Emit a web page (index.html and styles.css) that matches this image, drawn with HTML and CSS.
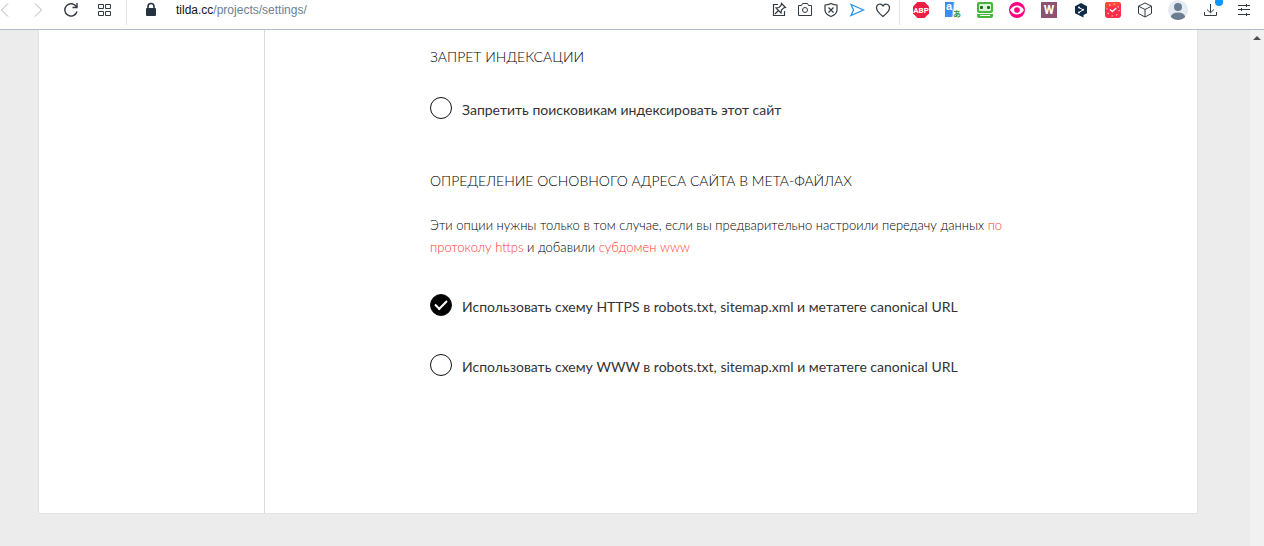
FILE: index.html
```html
<!DOCTYPE html>
<html lang="ru">
  <head>
    <meta charset="utf-8">
    <title>Настройки сайта</title>
    <meta name="viewport" content="width=device-width, initial-scale=1">
    <link rel="stylesheet" href="styles.css">
  </head>
  <body>
    <header class="toolbar">
      <nav class="nav">
        <button class="nav-btn nav-btn-back" aria-label="Назад"><svg width="20" height="20" viewBox="0 0 20 20"><path d="M8 3.500L1.500 10L8 16.500" stroke="#b4b4b4"/></svg></button>
        <button class="nav-btn" aria-label="Вперёд"><svg width="20" height="20" viewBox="0 0 20 20"><path d="M7 3.500l6.500 6.500L7 16.500" stroke="#b4b4b4"/></svg></button>
        <button class="nav-btn" aria-label="Обновить"><svg width="20" height="20" viewBox="0 0 20 20"><path d="M15.500 7A6.200 6.200 0 1 0 16 11.500M16 3v4.500h-4.500" stroke-width="1.400"/></svg></button>
        <button class="nav-btn" aria-label="Экспресс-панель"><svg width="20" height="20" viewBox="0 0 20 20"><path d="M4.500 4.500h5v4h-5zM11.500 4.500h5v4h-5zM4.500 11.500h5v4h-5zM11.500 11.500h5v4h-5z"/></svg></button>
      </nav>
      <div class="address">
        <svg class="lock" width="20" height="20" viewBox="0 0 20 20"><path d="M7 9V6.500a3 3 0 0 1 6 0V9" stroke="#26323d" stroke-width="1.600"/><rect x="5" y="8" width="10" height="8" rx="1" fill="#26323d" stroke="none"/></svg>
        <span class="url">tilda.cc<span class="url-path">/projects/settings/</span></span>
      </div>
      <div class="tools">
        <button class="tool" aria-label="Закрепить"><svg width="20" height="20" viewBox="0 0 20 20"><path d="M9 4.500H4.500v11h11V11M12.500 3.500l4 4-2 .500-2 2-.500 3-5-5 3-.500 2-2zM9.500 10.500l-3.500 3.500" stroke-width="1.200"/></svg></button>
        <button class="tool" aria-label="Снимок экрана"><svg width="20" height="20" viewBox="0 0 20 20"><path d="M3.500 5.500h3l1-2h5l1 2h3v10h-13z"/><circle cx="10" cy="10" r="2.500"/></svg></button>
        <button class="tool" aria-label="Блокировка рекламы"><svg width="20" height="20" viewBox="0 0 20 20"><path d="M10 3.500c2 1 4 1.500 6 1.500v5c0 3-2 5-6 6.500C6 15 4 13 4 10V5c2 0 4-.500 6-1.500zM7.500 7.500l5 5M12.500 7.500l-5 5" stroke-width="1.200"/></svg></button>
        <button class="tool" aria-label="Отправить"><svg width="20" height="20" viewBox="0 0 20 20"><path d="M4 4.500l12.500 5.500L4 15.500 6.500 10z" stroke="#2196f3" stroke-width="1.300"/></svg></button>
        <button class="tool" aria-label="В избранное"><svg width="20" height="20" viewBox="0 0 20 20"><path d="M10 16.500C6 13.500 3.500 11 3.500 7.800 3.500 4 8.300 2.800 10 6c1.700-3.200 6.500-2 6.500 1.800 0 3.200-2.500 5.700-6.500 8.700z" stroke-width="1.200"/></svg></button>
      </div>
      <div class="extensions">
        <button class="ext" aria-label="Adblock Plus"><svg width="20" height="20" viewBox="0 0 20 20"><path d="M6.500 2h7L18 6.500v7L13.500 18h-7L2 13.500v-7z" fill="#ed1e45" stroke="none"/><text x="10" y="13" class="abp">ABP</text></svg></button>
        <button class="ext" aria-label="Переводчик"><svg width="20" height="20" viewBox="0 0 20 20"><path d="M2 2h9L9 17H2z" fill="#3b8cf5" stroke="none"/><path d="M11 2L9 17" stroke="#7db4fa"/><text x="6" y="10" class="tr-a">a</text><text x="14" y="17" class="tr-b">あ</text></svg></button>
        <button class="ext" aria-label="RoboForm"><svg width="20" height="20" viewBox="0 0 20 20"><rect x="2" y="2" width="16" height="11" rx="2" fill="#45b83c" stroke="none"/><rect x="4" y="4" width="12" height="7" rx="1" fill="#d9f5d6" stroke="none"/><path d="M2 14h16v2a2 2 0 0 1-2 2H4a2 2 0 0 1-2-2z" fill="#45b83c" stroke="none"/><rect x="5" y="6" width="3" height="3" rx="1" fill="#1f6b1c" stroke="none"/><rect x="12" y="6" width="3" height="3" rx="1" fill="#1f6b1c" stroke="none"/><path d="M5 15.500h10" stroke="#fff"/></svg></button>
        <button class="ext" aria-label="Просмотр"><svg width="20" height="20" viewBox="0 0 20 20"><circle cx="10" cy="10" r="8" fill="#ff0080" stroke="none"/><path d="M3 10c3.500-6 10.500-6 14 0-3.500 6-10.500 6-14 0z" fill="#fff" stroke="none"/><circle cx="10" cy="10" r="2.800" fill="#ff0080" stroke="none"/></svg></button>
        <button class="ext" aria-label="W"><svg width="20" height="20" viewBox="0 0 20 20"><rect x="2" y="2" width="16" height="16" fill="#8c5270" stroke="none"/><text x="10" y="14" class="ext-w">W</text></svg></button>
        <button class="ext" aria-label="DeepL"><svg width="20" height="20" viewBox="0 0 20 20"><path d="M10 3l6 3.300v7L12.500 15v2.500L4 13.200V6.300z" fill="#0f2b46" stroke="none"/><path d="M8 7.500l4 2.300-4 2.700" stroke="#fff"/><g fill="#fff" stroke="none"><circle cx="8" cy="7.500" r="1"/><circle cx="12" cy="9.800" r="1"/><circle cx="8" cy="12.500" r="1"/></g></svg></button>
        <button class="ext" aria-label="Таймер"><svg width="20" height="20" viewBox="0 0 20 20"><rect x="2" y="2" width="16" height="16" rx="3" fill="#ff2d4a" stroke="none"/><path d="M2 8V5a3 3 0 0 1 3-3h10a3 3 0 0 1 3 3z" fill="#ff4938" stroke="none"/><path d="M7 9.500l2.300 2 4-3.500" stroke="#fff" stroke-width="1.400"/><circle cx="10" cy="10" r="6" stroke="#ffd9d9" stroke-width="1.200" stroke-dasharray="1.200 3.512"/></svg></button>
        <button class="ext" aria-label="Расширения"><svg width="20" height="20" viewBox="0 0 20 20"><path d="M10 3l6.500 3.200v7.300L10 17l-6.500-3.500V6.200zM3.500 6.200L10 9.500l6.500-3.300M10 9.500V17"/></svg></button>
        <button class="ext" aria-label="Профиль"><svg width="20" height="20" viewBox="0 0 20 20"><circle cx="10" cy="10" r="10" fill="#e4ebf3" stroke="none"/><circle cx="10" cy="7" r="4" fill="#6b7d91" stroke="none"/><path d="M2.800 17c.500-3 3-4.500 7.200-4.500s6.700 1.500 7.200 4.500c-4 4-10.400 4-14.400 0z" fill="#6b7d91" stroke="none"/></svg></button>
        <button class="ext ext-download" aria-label="Загрузки"><svg width="20" height="20" viewBox="0 0 20 20"><path d="M3.500 12v3.500h12V12M9.500 4v8.500M6 9.500l3.500 3.300L13 9.500"/></svg><span class="dot"></span></button>
        <button class="ext" aria-label="Настройки"><svg width="20" height="20" viewBox="0 0 20 20"><path d="M4 5.500h12M4 9.500h12M4 14.500h12M12.500 4v3M7.500 8v3M12.500 13v3"/></svg></button>
      </div>
    </header>

    <div class="viewport">
      <main class="page">
        <div class="sheet">
          <aside class="sidebar"></aside>
          <form class="settings">
            <h2 class="title">Запрет индексации</h2>
            <label class="option"><input class="check" type="checkbox"><span class="option-text">Запретить поисковикам индексировать этот сайт</span></label>

            <h2 class="title title-next">Определение основного адреса сайта в мета-файлах</h2>
            <p class="hint">Эти опции нужны только в том случае, если вы предварительно настроили передачу данных <a href="#">по протоколу https</a> и добавили <a href="#">субдомен www</a></p>
            <div class="options">
              <label class="option"><input class="check" type="checkbox" checked><span class="option-text">Использовать схему HTTPS в robots.txt, sitemap.xml и метатеге canonical URL</span></label>
              <label class="option"><input class="check" type="checkbox"><span class="option-text">Использовать схему WWW в robots.txt, sitemap.xml и метатеге canonical URL</span></label>
            </div>
          </form>
        </div>
      </main>
      <div class="scrollbar"><svg width="8" height="4" viewBox="0 0 8 4"><path d="M0 4l4-4 4 4z" fill="#505050"/></svg></div>
    </div>
  </body>
</html>
```
FILE: styles.css
```css
* { box-sizing: border-box; }
body {
  margin: 0;
  min-height: 100vh;
  display: flex;
  flex-direction: column;
  background: #ececec;
  color: #222;
  font-family: Lato, "Open Sans", sans-serif;
}
button {
  padding: 0;
  border: 0;
  background: none;
  cursor: pointer;
}

/* browser bar */
.toolbar {
  display: flex;
  height: 30px;
  background: #fff;
  border-bottom: 1px solid #b0bcc7;
}
.toolbar svg {
  display: block;
  fill: none;
  stroke: #333b42;
}
.nav {
  display: flex;
  height: 25px;
  padding-right: 6px;
  border-right: 1px solid #e2e4e8;
}
.nav-btn {
  width: 33px;
  height: 20px;
  display: flex;
  justify-content: center;
}
.nav-btn-back {
  width: 21px;
  justify-content: flex-start;
}
.address {
  flex: 1;
  display: flex;
  gap: 15px;
  height: 20px;
  padding-left: 14px;
}
.url {
  font-family: "Liberation Sans", Arial, sans-serif;
  font-size: 12px;
  line-height: 20px;
  color: #111;
}
.url-path { color: #6b7f93; }
.tools {
  display: flex;
  height: 25px;
  padding-right: 3px;
  border-right: 1px solid #e2e4e8;
}
.tool, .ext {
  width: 26px;
  height: 20px;
  display: flex;
  justify-content: center;
}
.extensions {
  display: flex;
  padding: 0 4px 0 5px;
}
.ext { width: 32px; flex-shrink: 0; }
.ext:nth-last-child(-n+3) { width: 33px; }
.toolbar text {
  stroke: none;
  fill: #fff;
  text-anchor: middle;
  font-family: "Liberation Sans", Arial, sans-serif;
  font-weight: bold;
}
.toolbar .abp {
  font-family: Roboto, sans-serif;
  font-size: 8px;
}
.toolbar .tr-a { font-size: 11px; }
.toolbar .tr-b {
  font-family: "Noto Sans CJK JP", sans-serif;
  font-size: 8px;
  fill: #388e3c;
}
.toolbar .ext-w {
  font-family: Roboto, sans-serif;
  font-size: 12px;
}
.ext-download { position: relative; }
.dot {
  position: absolute;
  top: -2px;
  right: 4px;
  width: 8px;
  height: 8px;
  border-radius: 50%;
  background: #0a95ff;
}

/* page */
.viewport {
  flex: 1;
  display: flex;
}
.page {
  flex: 1;
  display: flex;
  padding: 0 52px 32px 38px;
}
.sheet {
  flex: 1;
  display: flex;
  background: #fff;
  border: 1px solid #e2e2e2;
  border-top: 0;
}
.sidebar {
  width: 226px;
  flex-shrink: 0;
  border-right: 1px solid #d9d9d9;
}
.settings {
  flex: 1;
  padding: 16px 165px 60px;
}
.title {
  margin: 0 0 29px;
  color: #000;
  font-size: 14px;
  line-height: 22px;
  font-weight: 300;
  text-transform: uppercase;
}
.title-next { margin: 47px 0 22px; }
.hint {
  margin: 0 0 36px;
  color: #000;
  font-size: 13px;
  line-height: 22px;
  font-weight: 300;
}
.hint a {
  color: #ff3b2d;
  text-decoration: none;
}
.options {
  display: grid;
  gap: 34px;
}
.option {
  display: flex;
  gap: 10px;
  cursor: pointer;
}
.option-text {
  color: #333;
  font-size: 14px;
  line-height: 26px;
}
.check {
  appearance: none;
  flex-shrink: 0;
  width: 22px;
  height: 22px;
  margin: 0;
  display: grid;
  place-items: center;
  border: 1px solid #111;
  border-radius: 50%;
}
.check:checked { background: #000; }
.check:checked::before {
  content: "";
  width: 10px;
  height: 5px;
  margin-bottom: 3px;
  border: solid #fff;
  border-width: 0 0 2px 2px;
  transform: rotate(-45deg);
}
.scrollbar {
  width: 14px;
  display: flex;
  justify-content: center;
  padding-top: 6px;
  background: #f1f1f1;
}
```
